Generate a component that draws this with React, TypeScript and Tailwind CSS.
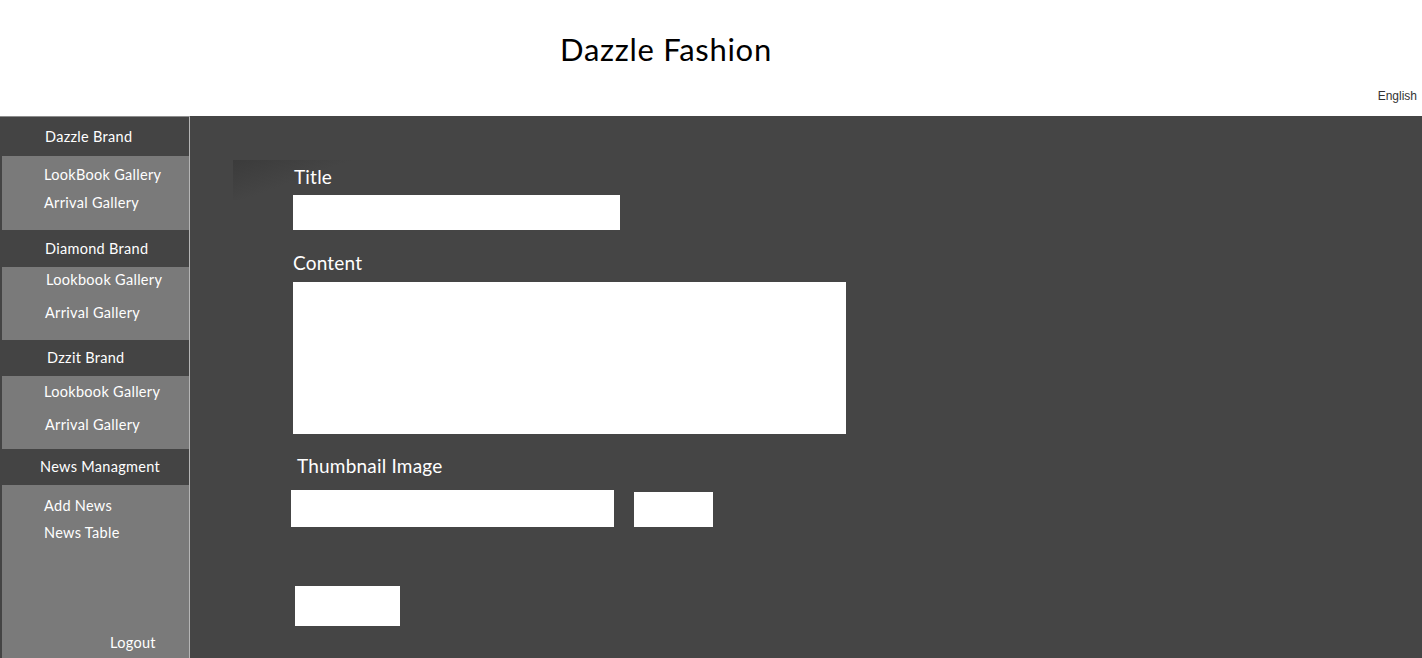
import React from 'react';

const font = { fontFamily: '"Lato", "DejaVu Sans", sans-serif' };

type Group = { title: string; pad: string; items: { label: string; pad: string }[]; hClass: string; bClass: string };

const groups: Group[] = [
  {
    title: 'Dazzle Brand',
    pad: 'pl-[43px]',
    hClass: 'h-[39px]',
    bClass: 'h-[74px] pt-[10px] gap-[10px]',
    items: [
      { label: 'LookBook Gallery', pad: 'pl-[42px]' },
      { label: 'Arrival Gallery', pad: 'pl-[42px]' },
    ],
  },
  {
    title: 'Diamond Brand',
    pad: 'pl-[43px]',
    hClass: 'h-[37px]',
    bClass: 'h-[73px] pt-[4px] gap-[15px]',
    items: [
      { label: 'Lookbook Gallery', pad: 'pl-[44px]' },
      { label: 'Arrival Gallery', pad: 'pl-[43px]' },
    ],
  },
  {
    title: 'Dzzit Brand',
    pad: 'pl-[45px]',
    hClass: 'h-[36px]',
    bClass: 'h-[73px] pt-[7px] gap-[15px]',
    items: [
      { label: 'Lookbook Gallery', pad: 'pl-[42px]' },
      { label: 'Arrival Gallery', pad: 'pl-[43px]' },
    ],
  },
];

function Sidebar() {
  return (
    <aside className="w-[190px] shrink-0 flex flex-col border-t border-[#8d8d8d] border-r border-r-[#b5b5b5] pl-[2px] bg-[#444444] text-white text-[14.5px] tracking-[0.3px]" style={font}>
      {groups.map((g) => (
        <div key={g.title} className="flex flex-col">
          <div className={`${g.hClass} ${g.pad} flex items-center bg-[#444444]`}>{g.title}</div>
          <div className={`${g.bClass} flex flex-col bg-[#7a7a7a] leading-[18px]`}>
            {g.items.map((it) => (
              <div key={it.label} className={it.pad}>{it.label}</div>
            ))}
          </div>
        </div>
      ))}
      <div className="h-[36px] pl-[38px] flex items-center bg-[#444444]">News Managment</div>
      <div className="flex-1 flex flex-col bg-[#7a7a7a] pt-[12px] leading-[18px]">
        <div className="pl-[42px]">Add News</div>
        <div className="pl-[42px] mt-[9px]">News Table</div>
        <div className="mt-auto mb-[6px] pl-[108px]">Logout</div>
      </div>
    </aside>
  );
}

function Form() {
  return (
    <main className="flex-1 bg-[#454545] pt-[44px] pl-[43px]" style={font}>
      <div className="pl-[60px] text-white text-[19px] tracking-[0.2px] bg-[linear-gradient(160deg,#3b3b3b,#454545_45%)] bg-no-repeat bg-[length:157px_40px]">
        <div className="pt-[5px] pl-[1px] leading-[24px]">Title</div>
        <div className="mt-[6px] w-[327px] h-[35px] bg-white" />
        <div className="mt-[21px] leading-[24px]">Content</div>
        <div className="mt-[7px] w-[553px] h-[152px] bg-white" />
        <div className="mt-[20px] pl-[4px] leading-[24px]">Thumbnail Image</div>
        <div className="mt-[12px] flex items-end gap-[20px] -ml-[2px]">
          <div className="w-[323px] h-[37px] bg-white" />
          <div className="w-[79px] h-[35px] bg-white" />
        </div>
        <div className="mt-[59px] ml-[2px] w-[105px] h-[40px] bg-white" />
      </div>
    </main>
  );
}

export default function App() {
  return (
    <div className="w-[1422px] h-[658px] flex flex-col overflow-hidden bg-white">
      <header className="h-[116px] shrink-0 relative bg-white">
        <div className="pr-[90px] pt-[29px] text-center text-[31px] tracking-[0.7px] leading-[40px] text-black" style={font}>Dazzle Fashion</div>
        <div className="absolute right-[5px] top-[87px] text-[12px] text-[#333333]" style={{ fontFamily: '"Liberation Sans", Arial, sans-serif' }}>English</div>
      </header>
      <div className="flex flex-1 min-h-0">
        <Sidebar />
        <Form />
      </div>
    </div>
  );
}
